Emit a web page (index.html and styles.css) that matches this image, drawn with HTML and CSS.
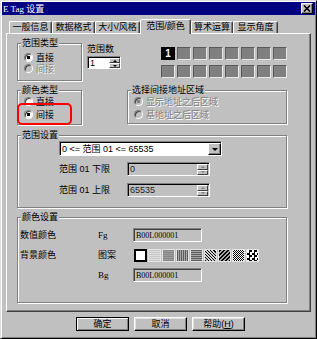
FILE: index.html
```html
<!DOCTYPE html>
<html>
<head>
    <meta charset="utf-8">
    <title>E Tag 设置</title>
    <link rel="stylesheet" href="styles.css">
</head>
<body>
    <div class="window">
        <div class="titlebar">
            <span class="title">E Tag 设置</span>
            <span class="close">
                <svg width="8" height="7" viewBox="0 0 8 7"><path d="M1 0.5 L7 6.5 M7 0.5 L1 6.5" stroke="#000" stroke-width="1.6"/></svg>
            </span>
        </div>

        <div class="tabs">
            <div class="tab tab-general">一般信息</div>
            <div class="tab tab-format">数据格式</div>
            <div class="tab tab-size">大小/风格</div>
            <div class="tab tab-range active">范围/颜色</div>
            <div class="tab tab-math">算术运算</div>
            <div class="tab tab-angle">显示角度</div>
        </div>

        <div class="panel">
            <div class="row row-top">
                <fieldset class="group group-type">
                    <legend>范围类型</legend>
                    <div class="options">
                        <div class="opt"><span class="radio checked"></span>直接</div>
                        <div class="opt disabled"><span class="radio"></span>间接</div>
                    </div>
                </fieldset>

                <div class="count">
                    <div class="count-label">范围数</div>
                    <div class="spinbox">
                        <span class="spin-text">1</span>
                        <span class="spin">
                            <span><i class="arrow-up"></i></span>
                            <span><i class="arrow-down"></i></span>
                        </span>
                    </div>
                </div>

                <div class="swatches">
                    <span class="swatch current">1</span>
                    <span class="swatch"></span><span class="swatch"></span><span class="swatch"></span>
                    <span class="swatch"></span><span class="swatch"></span><span class="swatch"></span>
                    <span class="swatch"></span>
                    <span class="swatch"></span><span class="swatch"></span><span class="swatch"></span>
                    <span class="swatch"></span><span class="swatch"></span><span class="swatch"></span>
                    <span class="swatch"></span><span class="swatch"></span>
                </div>
            </div>

            <div class="row row-mid">
                <fieldset class="group group-color">
                    <legend>颜色类型</legend>
                    <div class="options">
                        <div class="opt"><span class="radio"></span>直接</div>
                        <div class="opt"><span class="radio checked"></span>间接</div>
                    </div>
                    <div class="mark"></div>
                </fieldset>

                <fieldset class="group group-addr">
                    <legend>选择间接地址区域</legend>
                    <div class="options">
                        <div class="opt disabled"><span class="radio checked"></span>显示地址之后区域</div>
                        <div class="opt disabled"><span class="radio"></span>基地址之后区域</div>
                    </div>
                </fieldset>
            </div>

            <fieldset class="group group-range">
                <legend>范围设置</legend>
                <div class="dropdown">
                    <span class="dropdown-text">0 &lt;= 范围 01 &lt;= 65535</span>
                    <span class="dropdown-btn"><i class="arrow-big"></i></span>
                </div>
                <div class="range-row">
                    <span class="range-label">范围 01 下限</span>
                    <div class="field">
                        <span class="field-text">0</span>
                        <span class="spin off">
                            <span><i class="arrow-up"></i></span>
                            <span><i class="arrow-down"></i></span>
                        </span>
                    </div>
                </div>
                <div class="range-row">
                    <span class="range-label">范围 01 上限</span>
                    <div class="field">
                        <span class="field-text">65535</span>
                        <span class="spin off">
                            <span><i class="arrow-up"></i></span>
                            <span><i class="arrow-down"></i></span>
                        </span>
                    </div>
                </div>
            </fieldset>

            <fieldset class="group group-colors">
                <legend>颜色设置</legend>
                <div class="color-grid">
                    <span>数值颜色</span>
                    <span class="tag">Fg</span>
                    <div class="addr">B00L000001</div>

                    <span>背景颜色</span>
                    <span>图案</span>
                    <div class="patterns">
                        <span class="pat pat-white"></span>
                        <span class="pat pat-light"></span>
                        <span class="pat pat-gray"></span>
                        <span class="pat pat-vert"></span>
                        <span class="pat pat-horz"></span>
                        <span class="pat pat-back"></span>
                        <span class="pat pat-fwd"></span>
                        <span class="pat pat-fine"></span>
                        <span class="pat pat-check"></span>
                    </div>

                    <span></span>
                    <span class="tag">Bg</span>
                    <div class="addr">B00L000001</div>
                </div>
            </fieldset>
        </div>

        <div class="buttons">
            <button type="button" class="default">确定</button>
            <button type="button">取消</button>
            <button type="button">帮助(<u>H</u>)</button>
        </div>
    </div>
</body>
</html>
```

FILE: styles.css
```css
* {
    box-sizing: border-box;
}

body {
    margin: 0;
    background: #c0c0c0;
    font-family: "Liberation Sans", "Noto Sans CJK SC", sans-serif;
    font-size: 9px;
    line-height: 10px;
    color: #000;
}

.window {
    width: 317px;
    height: 339px;
    padding: 1px;
    background: #c0c0c0;
    border: 1px solid;
    border-color: #dfdfdf #000 #000 #dfdfdf;
    box-shadow: inset 1px 1px 0 #fff, inset -1px -1px 0 #808080;
    display: flex;
    flex-direction: column;
}

/* title bar */
.titlebar {
    height: 13px;
    background: #000080;
    color: #fff;
    display: flex;
    align-items: center;
    justify-content: space-between;
    padding: 0 2px 0 1px;
}

.title {
    font-family: "Liberation Serif", "Noto Sans CJK SC", serif;
    font-size: 9px;
}

.close {
    width: 12px;
    height: 11px;
    background: #c0c0c0;
    border: 1px solid;
    border-color: #fff #000 #000 #fff;
    box-shadow: inset -1px -1px 0 #808080;
    display: flex;
    align-items: center;
    justify-content: center;
}

/* tabs */
.tabs {
    height: 18px;
    padding-left: 7px;
    display: flex;
    align-items: flex-end;
}

.tab {
    height: 12px;
    border: 1px solid;
    border-bottom: none;
    border-color: #fff #404040 transparent #fff;
    border-radius: 2px 2px 0 0;
    box-shadow: inset -1px 0 0 #808080;
    text-align: center;
    line-height: 11px;
}

.tab.active {
    height: 15px;
    margin-bottom: -1px;
    background: #c0c0c0;
    position: relative;
    z-index: 1;
    line-height: 12px;
}

.tab-general { width: 43px; }
.tab-format { width: 43px; }
.tab-size { width: 45px; }
.tab-range { width: 51px; }
.tab-math { width: 42px; }
.tab-angle { width: 45px; }

/* panel */
.panel {
    height: 279px;
    margin: 0 4px;
    padding: 4px 23px 0 10px;
    border: 1px solid;
    border-color: #fff #404040 #404040 #fff;
    box-shadow: inset -1px -1px 0 #808080;
}

.row {
    display: flex;
}

.group {
    margin: 0;
    padding: 0;
    min-width: 0;
    border: 1px solid #808080;
    box-shadow: 1px 1px 0 #fff, inset 1px 1px 0 #fff;
}

.group legend {
    margin-left: 3px;
    padding: 0 1px;
    background: #c0c0c0;
    line-height: 10px;
}

.options {
    padding-left: 6px;
}

.opt {
    display: flex;
    align-items: center;
    gap: 3px;
    height: 12px;
}

.opt.disabled {
    color: #808080;
    text-shadow: 1px 1px 0 #fff;
}

.radio {
    width: 9px;
    height: 9px;
    border-radius: 50%;
    border: 1px solid;
    border-color: #808080 #fff #fff #808080;
    background: #fff;
    box-shadow: inset 1px 1px 0 #404040;
}

.radio.checked {
    background: radial-gradient(circle, #000 0 1.5px, #fff 2px);
}

.opt.disabled .radio {
    background: #c0c0c0;
}

.opt.disabled .radio.checked {
    background: radial-gradient(circle, #808080 0 1.5px, #c0c0c0 2px);
}

/* top row */
.row-top {
    height: 43px;
}

.group-type {
    width: 65px;
    height: 43px;
}

.group-type .options {
    padding-top: 4px;
}

.group-type .opt {
    height: 11px;
}

.count {
    margin-left: 5px;
    padding-top: 6px;
}

.spinbox {
    width: 34px;
    height: 13px;
    margin-top: 2px;
    background: #fff;
    border: 1px solid;
    border-color: #808080 #fff #fff #808080;
    box-shadow: inset 1px 1px 0 #000;
    display: flex;
    padding: 1px 0 0 1px;
}

.spin-text {
    flex: 1;
    padding-left: 1px;
    line-height: 10px;
}

.spin {
    width: 11px;
    display: flex;
    flex-direction: column;
}

.spin span {
    flex: 1;
    background: #c0c0c0;
    border: 1px solid;
    border-color: #fff #404040 #404040 #fff;
    display: flex;
    align-items: center;
    justify-content: center;
}

.arrow-up,
.arrow-down {
    width: 0;
    height: 0;
    border-left: 2px solid transparent;
    border-right: 2px solid transparent;
}

.arrow-up {
    border-bottom: 2px solid #000;
}

.arrow-down {
    border-top: 2px solid #000;
}

.spin.off .arrow-up {
    border-bottom-color: #808080;
}

.spin.off .arrow-down {
    border-top-color: #808080;
}

.swatches {
    margin-left: auto;
    margin-top: 9px;
    display: grid;
    grid-template-columns: repeat(8, 14px);
    grid-auto-rows: 13px;
    column-gap: 2px;
    row-gap: 5px;
}

.swatch {
    background: #808080;
    border: 1px solid;
    border-color: #5a5a5a #e8e8e8 #e8e8e8 #5a5a5a;
}

.swatch.current {
    background: #000;
    border-color: #000;
    color: #fff;
    font-weight: bold;
    font-size: 10px;
    line-height: 11px;
    text-align: center;
}

/* middle row */
.row-mid {
    margin-top: 4px;
    height: 40px;
}

.group-color {
    width: 65px;
    height: 40px;
    position: relative;
}

.group-color .opt {
    height: 13px;
}

.mark {
    position: absolute;
    left: -1px;
    top: 8px;
    width: 55px;
    height: 22px;
    border: 2px solid #f00;
    border-radius: 5px;
}

.group-addr {
    width: 160px;
    height: 39px;
    margin-left: auto;
}

.group-addr .opt {
    height: 13px;
}

/* range settings */
.group-range {
    margin-top: 5px;
    height: 78px;
}

.dropdown {
    width: 163px;
    height: 15px;
    margin: 1px 0 0 41px;
    background: #fff;
    border: 1px solid;
    border-color: #808080 #fff #fff #808080;
    box-shadow: inset 1px 1px 0 #000;
    padding: 1px 0 0 1px;
    display: flex;
}

.dropdown-text {
    flex: 1;
    padding-left: 1px;
    line-height: 12px;
}

.dropdown-btn {
    width: 13px;
    background: #c0c0c0;
    border: 1px solid;
    border-color: #fff #000 #000 #fff;
    box-shadow: inset -1px -1px 0 #808080;
    display: flex;
    align-items: center;
    justify-content: center;
}

.arrow-big {
    width: 0;
    height: 0;
    border-left: 3px solid transparent;
    border-right: 3px solid transparent;
    border-top: 3px solid #000;
}

.range-row {
    display: flex;
    align-items: center;
    margin: 6px 0 0 41px;
}

.range-row + .range-row {
    margin-top: 7px;
}

.range-label {
    width: 68px;
}

.field {
    width: 83px;
    height: 14px;
    border: 1px solid;
    border-color: #808080 #fff #fff #808080;
    box-shadow: inset 1px 1px 0 #000;
    padding: 1px 1px 0 1px;
    display: flex;
}

.field-text {
    flex: 1;
    padding-left: 1px;
    color: #202020;
    line-height: 10px;
}

/* colour settings */
.group-colors {
    margin-top: 4px;
    height: 91px;
}

.color-grid {
    display: grid;
    grid-template-columns: 78px 35px auto;
    grid-auto-rows: 14px;
    row-gap: 6px;
    align-items: center;
    padding: 6px 0 0 2px;
}

.tag {
    font-family: "Liberation Serif", serif;
}

.addr {
    width: 69px;
    height: 14px;
    border: 1px solid;
    border-color: #808080 #fff #fff #808080;
    box-shadow: inset 1px 1px 0 #404040;
    padding: 2px 0 0 2px;
    font-family: "Liberation Serif", serif;
    font-size: 8px;
    line-height: 10px;
}

.patterns {
    display: flex;
    gap: 1px;
    margin-left: 1px;
}

.pat {
    width: 13px;
    height: 13px;
    border: 1px solid #e4e4e4;
}

.pat-white {
    background: #fff;
    border: 2px solid #000;
}

.pat-light {
    background: repeating-linear-gradient(0deg, #c8c8c8 0 1px, #dcdcdc 1px 2px);
}

.pat-gray {
    background: repeating-linear-gradient(0deg, #888 0 1px, #9a9a9a 1px 2px);
}

.pat-vert {
    background: repeating-linear-gradient(90deg, #5c5c5c 0 1px, #a8a8a8 1px 2px);
}

.pat-horz {
    background: repeating-linear-gradient(0deg, #5c5c5c 0 1px, #a8a8a8 1px 2px);
}

.pat-back {
    background: repeating-linear-gradient(45deg, #000 0 1px, #d0d0d0 1px 2.2px);
}

.pat-fwd {
    background: repeating-linear-gradient(-45deg, #000 0 1.2px, #a0a0a0 1.2px 2.8px);
}

.pat-fine {
    background: repeating-conic-gradient(#000 0 25%, #fff 0 50%) 0 0 / 2px 2px;
}

.pat-check {
    background: repeating-conic-gradient(#000 0 25%, #fff 0 50%) 0 0 / 5px 5px;
}

/* bottom buttons */
.buttons {
    display: flex;
    gap: 5px;
    margin-top: 5px;
    padding-left: 74px;
}

button {
    width: 53px;
    height: 14px;
    padding: 0;
    font-family: inherit;
    font-size: 9px;
    line-height: 10px;
    color: #000;
    background: #c0c0c0;
    border: 1px solid;
    border-color: #fff #000 #000 #fff;
    box-shadow: inset -1px -1px 0 #808080, inset 1px 1px 0 #dfdfdf;
}

button.default {
    border-color: #000;
    box-shadow: inset 1px 1px 0 #fff, inset -1px -1px 0 #808080;
}
```
